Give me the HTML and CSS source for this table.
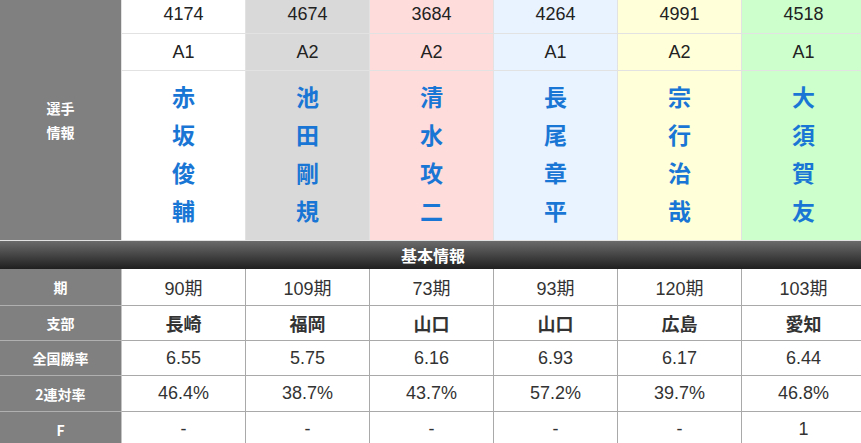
FILE: index.html
```html
<!DOCTYPE html>
<html lang="ja">
<head>
<meta charset="utf-8">
<link rel="stylesheet" href="styles.css">
</head>
<body>
<div class="wrap">
<table class="racer">
  <colgroup>
    <col class="w-lab"><col class="w-c"><col class="w-c"><col class="w-c"><col class="w-c"><col class="w-c"><col class="w-c">
  </colgroup>
  <tr class="r-no">
    <th class="lab lab-top" rowspan="3">選手<br>情報</th>
    <td class="c1">4174</td><td class="c2">4674</td><td class="c3">3684</td><td class="c4">4264</td><td class="c5">4991</td><td class="c6">4518</td>
  </tr>
  <tr class="r-cls">
    <td class="c1">A1</td><td class="c2">A2</td><td class="c3">A2</td><td class="c4">A1</td><td class="c5">A2</td><td class="c6">A1</td>
  </tr>
  <tr class="r-name">
    <td class="c1"><span class="name">赤<br>坂<br>俊<br>輔</span></td>
    <td class="c2"><span class="name">池<br>田<br>剛<br>規</span></td>
    <td class="c3"><span class="name">清<br>水<br>攻<br>二</span></td>
    <td class="c4"><span class="name">長<br>尾<br>章<br>平</span></td>
    <td class="c5"><span class="name">宗<br>行<br>治<br>哉</span></td>
    <td class="c6"><span class="name">大<br>須<br>賀<br>友</span></td>
  </tr>
  <tr class="r-sec">
    <th class="sec" colspan="7">基本情報</th>
  </tr>
  <tr class="r-b r-ki">
    <th class="lab">期</th>
    <td>90期</td><td>109期</td><td>73期</td><td>93期</td><td>120期</td><td>103期</td>
  </tr>
  <tr class="r-b r-br">
    <th class="lab">支部</th>
    <td class="bold">長崎</td><td class="bold">福岡</td><td class="bold">山口</td><td class="bold">山口</td><td class="bold">広島</td><td class="bold">愛知</td>
  </tr>
  <tr class="r-b r-wr">
    <th class="lab">全国勝率</th>
    <td>6.55</td><td>5.75</td><td>6.16</td><td>6.93</td><td>6.17</td><td>6.44</td>
  </tr>
  <tr class="r-b r-2r">
    <th class="lab">2連対率</th>
    <td>46.4%</td><td>38.7%</td><td>43.7%</td><td>57.2%</td><td>39.7%</td><td>46.8%</td>
  </tr>
  <tr class="r-b r-f">
    <th class="lab">F</th>
    <td>-</td><td>-</td><td>-</td><td>-</td><td>-</td><td>1</td>
  </tr>
</table>
</div>
</body>
</html>
```
FILE: styles.css
```css
html, body {
  margin: 0;
  padding: 0;
  background: #fff;
}
.wrap {
  width: 861px;
  height: 443px;
  overflow: hidden;
}
.racer {
  table-layout: fixed;
  width: 866px;
  border-collapse: separate;
  border-spacing: 0;
  font-family: "Liberation Sans", "Noto Sans CJK JP", sans-serif;
  color: #222;
}
.w-lab { width: 122px; }
.w-c { width: 124px; }
.racer td, .racer th {
  box-sizing: border-box;
  padding: 0;
  text-align: center;
  vertical-align: middle;
}
.lab {
  background: #808080;
  color: #fff;
  font-size: 14px;
  font-weight: bold;
  font-family: "Noto Sans CJK JP", "Liberation Sans", sans-serif;
  border-right: 1px solid #c4c4c4;
}
.lab-top {
  line-height: 24px;
  padding-bottom: 4px;
  border-right: 1px solid #e2e2e2;
  border-bottom: 1px solid #e2e2e2;
}
.r-no td, .r-cls td, .r-name td {
  border-right: 1px solid #e2e2e2;
  border-bottom: 1px solid #e2e2e2;
  font-size: 18px;
}
.r-no td {
  height: 34px;
  padding-bottom: 5px;
}
.r-cls td {
  height: 37px;
}
.r-name td {
  height: 170px;
  padding-bottom: 6px;
}
.c1 { background: #ffffff; }
.c2 { background: #d9d9d9; }
.c3 { background: #ffdcdc; }
.c4 { background: #e8f3ff; }
.c5 { background: #ffffd9; }
.c6 { background: #ccffcc; }
.name {
  display: inline-block;
  font-family: "Noto Sans CJK JP", sans-serif;
  font-size: 23px;
  font-weight: bold;
  line-height: 38px;
  color: #1a76d4;
}
.sec {
  height: 28px;
  padding-left: 8px;
  background: linear-gradient(#6b6b6b, #1f1f1f);
  color: #fff;
  font-family: "Noto Sans CJK JP", sans-serif;
  font-size: 16px;
  font-weight: bold;
  line-height: 28px;
}
.r-b td, .r-b th {
  border-right: 1px solid #a9a9a9;
  border-bottom: 1px solid #a9a9a9;
}
.r-b td {
  font-size: 18px;
  color: #333;
  background: #fff;
}
.r-b .lab {
  border-right: 1px solid #c4c4c4;
  border-bottom: 1px solid #b0b0b0;
}
.r-b td.bold {
  font-family: "Noto Sans CJK JP", sans-serif;
  font-weight: bold;
}
.r-ki td, .r-ki th { height: 37px; }
.r-br td, .r-br th { height: 35px; }
.r-wr td, .r-wr th { height: 35px; }
.r-2r td, .r-2r th { height: 36px; }
.r-f td, .r-f th { height: 36px; }
```
